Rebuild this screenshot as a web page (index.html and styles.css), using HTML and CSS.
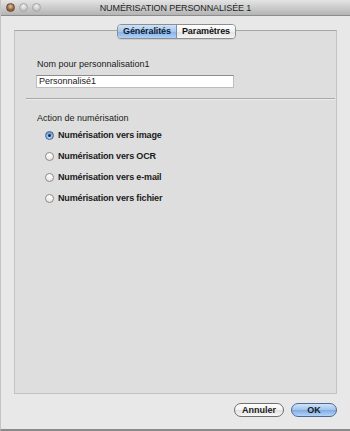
FILE: index.html
```html
<!DOCTYPE html>
<html>
<head>
<meta charset="utf-8">
<link rel="stylesheet" href="styles.css">
</head>
<body>
<div class="window">
  <div class="titlebar">
    <div class="lights">
      <span class="light close"></span>
      <span class="light"></span>
      <span class="light"></span>
    </div>
    <div class="title">NUMÉRISATION PERSONNALISÉE 1</div>
  </div>
  <div class="body">
    <div class="tabbox">
      <div class="tabs">
        <div class="tab active">Généralités</div>
        <div class="tab">Paramètres</div>
      </div>
      <div class="section">
        <div class="label">Nom pour personnalisation1</div>
        <div class="input">Personnalisé1</div>
      </div>
      <div class="sep"></div>
      <div class="section">
        <div class="label">Action de numérisation</div>
        <div class="radios">
          <div class="radio-row"><span class="radio on"></span><span>Numérisation vers image</span></div>
          <div class="radio-row"><span class="radio"></span><span>Numérisation vers OCR</span></div>
          <div class="radio-row"><span class="radio"></span><span>Numérisation vers e-mail</span></div>
          <div class="radio-row"><span class="radio"></span><span>Numérisation vers fichier</span></div>
        </div>
      </div>
    </div>
    <div class="buttons">
      <div class="btn">Annuler</div>
      <div class="btn default">OK</div>
    </div>
  </div>
</div>
</body>
</html>
```

FILE: styles.css
```css
html, body {
  margin: 0;
  padding: 0;
  background: #e8e8e8;
}
body {
  font-family: "Liberation Sans", Arial, sans-serif;
  font-size: 9px;
  color: #1a1a1a;
}
.window {
  width: 350px;
  height: 431px;
  box-sizing: border-box;
  display: flex;
  flex-direction: column;
  background: #e8e8e8;
  border-left: 1px solid #c4c4c4;
  border-bottom: 2px solid #8a8a8a;
}
.titlebar {
  height: 15px;
  flex: none;
  position: relative;
  background: linear-gradient(#e4e4e4, #b4b4b4);
  border-bottom: 1px solid #8c8c8c;
  display: flex;
  align-items: center;
  justify-content: center;
}
.lights {
  position: absolute;
  left: 5px;
  top: 3px;
  display: flex;
  gap: 4px;
}
.light {
  width: 9px;
  height: 9px;
  border-radius: 50%;
  box-sizing: border-box;
  background: radial-gradient(circle at 50% 30%, #f2f2f2, #c8c8c8 60%, #b0b0b0);
  border: 1px solid #a8a8a8;
}
.light.close {
  background: radial-gradient(circle at 50% 35%, #e9c4a0, #9a6a48 55%, #6b4530);
  border-color: #6a4a36;
}
.title {
  font-size: 9px;
  color: #1e1e1e;
  letter-spacing: -0.1px;
}
.body {
  flex: 1;
  display: flex;
  flex-direction: column;
  padding: 14px 13px 0 13px;
}
.tabbox {
  height: 364px;
  box-sizing: border-box;
  background: #dedede;
  border: 1px solid #c2c2c2;
  border-top-color: #a6a6a6;
  display: flex;
  flex-direction: column;
}
.tabs {
  display: flex;
  align-self: center;
  margin-top: -7px;
  margin-left: 2px;
  height: 13px;
  border: 1px solid #8e8e8e;
  border-radius: 4px;
  overflow: hidden;
  box-shadow: 0 1px 0 rgba(0,0,0,0.08);
}
.tab {
  padding: 0 5px;
  line-height: 12px;
  font-weight: bold;
  font-size: 9px;
  letter-spacing: -0.1px;
  background: linear-gradient(#ffffff, #f0f0f0 50%, #e2e2e2 51%, #f4f4f4);
  color: #111;
}
.tab.active {
  background: linear-gradient(#cfe2f8, #a6c6ee 50%, #86b0e6 51%, #b0d0f6);
  border-right: 1px solid #7a8ea8;
  color: #0b1a33;
}
.section {
  padding-left: 22px;
}
.tabs + .section {
  margin-top: 20px;
}
.label {
  line-height: 11px;
}
.input {
  margin-top: 5px;
  margin-left: -1px;
  width: 198px;
  height: 13px;
  box-sizing: border-box;
  background: #fff;
  border: 1px solid #bdbdbd;
  border-top-color: #8c8c8c;
  line-height: 11px;
  padding-left: 2px;
}
.sep {
  margin: 10px 1px 0 11px;
  height: 1px;
  background: #a8a8a8;
  border-bottom: 1px solid #ececec;
}
.sep + .section {
  margin-top: 13px;
}
.radios {
  display: flex;
  flex-direction: column;
  gap: 10px;
  margin-top: 6px;
  padding-left: 8px;
}
.radio-row {
  display: flex;
  align-items: center;
  gap: 4px;
  font-weight: bold;
  letter-spacing: -0.15px;
  line-height: 11px;
}
.radio {
  width: 9px;
  height: 9px;
  box-sizing: border-box;
  border-radius: 50%;
  border: 1px solid #8a8a8a;
  background: linear-gradient(#ffffff, #e6e6e6);
  position: relative;
}
.radio.on {
  border-color: #4a6a96;
  background: radial-gradient(circle at 50% 70%, #c8e0fa, #6f9ed8 70%, #5b86c0);
}
.radio.on::after {
  content: "";
  position: absolute;
  left: 2px;
  top: 2px;
  width: 3px;
  height: 3px;
  border-radius: 50%;
  background: #1a2a40;
}
.buttons {
  display: flex;
  justify-content: flex-end;
  gap: 7px;
  margin-top: 9px;
}
.btn {
  height: 14px;
  box-sizing: border-box;
  border: 1px solid #6f6f6f;
  border-radius: 7px;
  background: linear-gradient(#ffffff, #f2f2f2 50%, #e0e0e0 51%, #f8f8f8);
  font-weight: bold;
  font-size: 9px;
  line-height: 12px;
  text-align: center;
  width: 50px;
}
.btn.default {
  width: 46px;
  border-color: #4e6a94;
  background: linear-gradient(#cfe3f9, #9fc3ee 50%, #7eaae3 51%, #b4d4f7);
}
```
